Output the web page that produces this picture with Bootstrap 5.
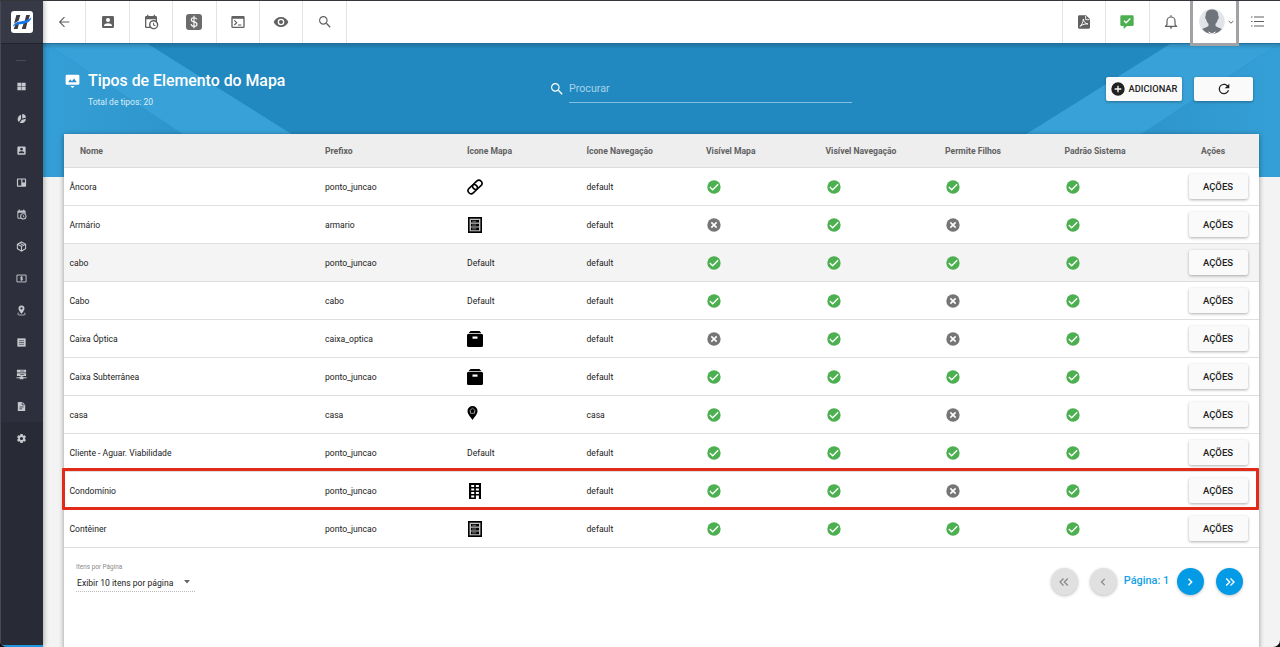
<!DOCTYPE html>
<html lang="pt-BR">
<head>
<meta charset="utf-8">
<meta name="viewport" content="width=device-width, initial-scale=1">
<title>Tipos de Elemento do Mapa</title>
<link href="https://cdn.jsdelivr.net/npm/bootstrap@5.3.0/dist/css/bootstrap.min.css" rel="stylesheet">
<style>
body{font-family:Roboto,"Liberation Sans",sans-serif;font-size:8.6px;line-height:1.4;color:#212121;background:#101014;height:647px;overflow:hidden}
svg{fill:currentColor;flex:none;display:block}
.i16{width:16px;height:16px}.i15{width:15px;height:15px}.i12{width:12px;height:12px}
.shell{height:647px;border-radius:0 0 7px 7px;background:#f3f3f4;overflow:hidden;position:relative}
.topline{position:absolute;top:0;left:0;right:0;height:1px;background:#35353c;z-index:9}
.side{width:43px;background:#2d303c;color:#c6c8cd;border-left:1px solid #474a56;z-index:3;box-shadow:1px 0 5px rgba(0,0,0,.3)}
.brand{height:44px;background:#373a46;border-bottom:1px solid #22252e;padding-right:1px}
.brand svg{width:22px;height:22px}
.dash{width:10px;height:1px;background:#4a4d59;margin:16px 16px 9px 15px}
.side nav{padding-right:2px}
.side nav a{height:32px;color:inherit}
.side nav svg{width:11px;height:11px}
.lower{background:#282a35;border-bottom:2px solid #1f96dd}
.bar{height:44px;background:#fff;color:#616161;border-bottom:1px solid #226e98}
.bar .cell{width:43.4px;border-right:1px solid #e3e3e3}
.bar .rcell{width:43.4px;border-left:1px solid #e3e3e3}
.avatar{width:49px;height:46px;border:3px solid #a0a2a6;border-top:0;background:#fff;position:relative;z-index:4;margin-left:-2px}
.hero{height:133px;background:#2189bf;color:#fff;position:relative}
.hero>.art{position:absolute;inset:0;width:100%;height:100%}
.hero-in{position:relative;padding:27px 27px 0 22px}
.hero h1{font-size:15.85px;font-weight:500;line-height:20px;margin:0;width:456px}
.sub{font-size:8.5px;color:#dceefa;line-height:12px;margin-top:5px}
.find{width:303px;margin-top:8px}
.find .box{width:283px;height:24px;border-bottom:1px solid #82bfe0;color:#a6d2ea;font-size:10.7px;line-height:20px;margin-left:4px}
.mbtn{background:#fafafa;color:#212121;border-radius:2px;font-weight:500;box-shadow:0 1px 3px rgba(0,0,0,.32);border:0;padding:0;text-transform:uppercase;display:flex;align-items:center;justify-content:center}
.hbtn{height:24px;font-size:9.33px;margin-top:6px}
.panel{width:1195px;height:520px;margin:-43px 0 0 21px;background:#fff;box-shadow:0 1px 5px rgba(0,0,0,.4);position:relative}
.grid-t{table-layout:fixed;width:1195px;margin:0;border-collapse:separate;border-spacing:0;line-height:12px}
.grid-t th{height:34px;background:#eee;color:#616161;font-size:8.6px;font-weight:700;padding:0 5.5px;vertical-align:middle;border-bottom:1px solid #dcdcdc}
.grid-t td{height:38px;padding:0 5.5px;vertical-align:middle;border-bottom:1px solid #dfdfdf}
.grid-t th:first-child{padding-left:16px}
.grid-t tr.hov td{background:#f4f4f4}
.grid-t .mbtn{width:59px;height:25px;font-size:9.5px;margin-left:4.5px}
.ok{color:#4caf50}.no{color:#757575}
.ic{color:#000}
.frame{position:absolute;left:-2px;top:334px;width:1197px;height:42px;border:3px solid #e12a18;border-radius:1px}
.pick small{font-size:6.4px;color:#8a8a8a;line-height:8px;display:block}
.pick .val{width:119px;height:20px;border-bottom:1px dotted #bbb;line-height:14px;font-size:8.6px;padding:4px 5px 0 1px}
.rnd{width:27px;height:27px;border-radius:50%;box-shadow:0 1px 3px rgba(0,0,0,.25);background:#039be5;color:#fff}
.rnd.off{background:#e0e0e0;color:#858585}
.pg{color:#139fe6;font-size:10.9px;font-weight:500;line-height:14px}
</style>
</head>
<body>
<svg width="0" height="0" class="position-absolute">
<defs>
<symbol id="ok" viewBox="0 0 24 24"><circle cx="12" cy="12" r="10"/><path d="M5.7 12L10 16.2 18.3 8" fill="none" stroke="#fff" stroke-width="2"/></symbol>
<symbol id="no" viewBox="0 0 24 24"><circle cx="12" cy="12" r="10"/><path d="M8 8l8 8M16 8l-8 8" stroke="#fff" stroke-width="2.3"/></symbol>
<symbol id="acc" viewBox="0 0 24 24"><path d="M6,17C6,15 10,13.9 12,13.9C14,13.9 18,15 18,17V18H6M15,9A3,3 0 0,1 12,12A3,3 0 0,1 9,9A3,3 0 0,1 12,6A3,3 0 0,1 15,9M3,5V19A2,2 0 0,0 5,21H19A2,2 0 0,0 21,19V5A2,2 0 0,0 19,3H5C3.89,3 3,3.9 3,5Z"/></symbol>
<symbol id="cal" viewBox="0 0 24 24"><path d="M15,13H16.5V15.82L18.94,17.23L18.19,18.53L15,16.69V13M19,8H5V19H9.67C9.24,18.09 9,17.07 9,16A7,7 0 0,1 16,9C17.07,9 18.09,9.24 19,9.67V8M5,21C3.89,21 3,20.1 3,19V5C3,3.89 3.89,3 5,3H6V1H8V3H16V1H18V3H19A2,2 0 0,1 21,5V11.1C22.24,12.36 23,14.09 23,16A7,7 0 0,1 16,23C14.09,23 12.36,22.24 11.1,21H5M16,11.15A4.85,4.85 0 0,0 11.15,16C11.15,18.68 13.32,20.85 16,20.85A4.85,4.85 0 0,0 20.85,16C20.85,13.32 18.68,11.15 16,11.15Z"/></symbol>
<symbol id="mag" viewBox="0 0 24 24"><path d="M9.500,3A6.500,6.500 0 0,1 16,9.500C16,11.110 15.410,12.590 14.440,13.730L14.710,14H15.500L20.500,19L19,20.500L14,15.500V14.710L13.730,14.440C12.590,15.410 11.110,16 9.500,16A6.500,6.500 0 0,1 3,9.500A6.500,6.500 0 0,1 9.500,3M9.500,4.700C6.850,4.700 4.700,6.850 4.700,9.500C4.700,12.150 6.850,14.300 9.500,14.300C12.150,14.300 14.300,12.150 14.300,9.500C14.300,6.850 12.150,4.700 9.500,4.700Z"/></symbol>
<symbol id="chain" viewBox="0 0 16 16"><g fill="none" stroke="#000" stroke-width="1.6"><rect x="-5.200" y="-3.100" width="10.400" height="6.200" rx="3.100" transform="translate(5.700 10.200) rotate(-43)"/><rect x="-5.200" y="-3.100" width="10.400" height="6.200" rx="3.100" transform="translate(10.300 5.800) rotate(-43)"/></g></symbol>
<symbol id="rack" viewBox="0 0 16 16"><path d="M1 0h14v16H1z"/><path d="M2.600 1.700h10.800v12.600H2.600z" fill="#c4c4c4"/><path d="M4 2.900h8v2.700H4zM4 6.700h8v2.700H4zM4 10.500h8v2.700H4z"/><path d="M5.200 4.250h4M5.200 8.050h4M5.200 11.850h4" stroke="#999" stroke-width=".8"/></symbol>
<symbol id="crate" viewBox="0 0 16 16"><path d="M3.600 0h8.800l2.200 2.200H1.400zM0 4.300a1.300 1.300 0 0 1 1.300-1.300h13.400A1.300 1.300 0 0 1 16 4.300v10.200a1.500 1.500 0 0 1-1.500 1.500h-13A1.500 1.500 0 0 1 0 14.500z"/><path d="M5.500 5.500h5v2.200h-5z" fill="#fff"/></symbol>
<symbol id="home" viewBox="0 0 10 14"><path d="M5 0a5 5 0 0 1 5 5c0 3.200-2.700 5.500-5 9C2.700 10.500 0 8.200 0 5a5 5 0 0 1 5-5z"/><path d="M1.900 5L5 2.200 8.100 5M3 4.800v2.500h4V4.800" fill="none" stroke="#ccc" stroke-width=".7"/></symbol>
<symbol id="bldg" viewBox="0 0 16 16"><path d="M2 0h12v16H2z"/><path d="M4.200 2h3v2.100h-3zM8.900 2h3v2.100h-3zM4.200 5.500h3v2.100h-3zM8.900 5.500h3v2.100h-3zM4.200 9h3v2.100h-3zM8.900 9h3v2.100h-3zM4.200 12.400h3v2h-3zM8.900 12.400h3V16h-3z" fill="#fff"/></symbol>
</defs></svg>

<div class="shell d-flex">
  <div class="topline"></div>
  <aside class="side d-flex flex-column flex-shrink-0">
    <div class="brand d-flex align-items-center justify-content-center flex-shrink-0">
      <svg viewBox="0 0 22 22"><rect width="22" height="22" rx="3" fill="#fff"/><path d="M5.400 4h4L7.600 9.800l-4.500 2.700zM15.200 4h3.800l-1.800 5.500-3.600.9zM4.500 13.600L8 12.300 6.600 18H2.700zM12.700 12l3.900-1.800L14.800 18h-4z" fill="#3c3c42"/><path d="M1.500 15.700C4 10.500 8.500 10.600 12 10c4-.7 6.500-2.200 8.500-3.800-.6 3.300-3 5.600-7.500 6.500-4.500.9-7.500.1-11.500 3z" fill="#1476e8"/></svg>
    </div>
    <div class="dash"></div>
    <nav class="d-flex flex-column">
      <a class="d-flex align-items-center justify-content-center"><svg viewBox="0 0 24 24"><path d="M3 4h8.500v7.500H3zM12.500 4H21v7.500h-8.500zM3 12.500h8.500V20H3zM12.500 12.500H21V20h-8.500z"/></svg></a>
      <a class="d-flex align-items-center justify-content-center"><svg viewBox="0 0 24 24"><path d="M11 4v9l-5 6.500A9.500 9.500 0 0 1 11 4zM13.500 2a9 9 0 0 1 8.500 8l-8.500 2zM13 14.500l8.700-2A9.500 9.500 0 0 1 8 21z"/></svg></a>
      <a class="d-flex align-items-center justify-content-center"><svg><use href="#acc"/></svg></a>
      <a class="d-flex align-items-center justify-content-center"><svg viewBox="0 0 24 24"><path fill-rule="evenodd" d="M4 3h16a2 2 0 0 1 2 2v14a2 2 0 0 1-2 2H4a2 2 0 0 1-2-2V5a2 2 0 0 1 2-2zm.500 2.500v13h7v-13zm9.500 0V12h5.500V5.500z"/></svg></a>
      <a class="d-flex align-items-center justify-content-center"><svg><use href="#cal"/></svg></a>
      <a class="d-flex align-items-center justify-content-center"><svg viewBox="0 0 24 24"><path d="M12 2l9 5v10l-9 5-9-5V7zM3 7l9 5 9-5M12 12v10M7.500 4.500l9 5" fill="none" stroke="currentColor" stroke-width="2.300"/></svg></a>
      <a class="d-flex align-items-center justify-content-center"><svg viewBox="0 0 24 24"><path d="M2 4.500h20v15H2z" fill="none" stroke="currentColor" stroke-width="2"/><path d="M15 9H10.500v3H14v3H9.500M12 7v10" fill="none" stroke="currentColor" stroke-width="2"/></svg></a>
      <a class="d-flex align-items-center justify-content-center"><svg viewBox="0 0 24 24"><path fill-rule="evenodd" d="M12 1a6.500 6.500 0 0 1 6.500 6.500C18.500 12 12 19 12 19S5.500 12 5.500 7.500A6.500 6.500 0 0 1 12 1zm0 4a2.500 2.500 0 1 0 0 5 2.500 2.500 0 0 0 0-5z"/><path d="M6 17c-6 4 1 5 6 5s12-1 6-5" fill="none" stroke="currentColor" stroke-width="2"/></svg></a>
      <a class="d-flex align-items-center justify-content-center"><svg viewBox="0 0 24 24"><path d="M3 3h18v18H3z"/><path d="M6.500 8h11M6.500 12h11M6.500 16h11" stroke="#5e616c" stroke-width="2"/></svg></a>
      <a class="d-flex align-items-center justify-content-center"><svg viewBox="0 0 24 24"><path d="M2 1.500h20v6H2zM2 9h20v6H2zM1 18h22v2.200H1zM11 14h2v4h-2zM8 16.500h8v6H8z"/><path d="M9 4.500h9M9 12h9" stroke="#2d303c" stroke-width="1.300"/></svg></a>
      <a class="d-flex align-items-center justify-content-center"><svg viewBox="0 0 24 24"><path d="M5 2h9l6 6v14H4V3z"/><path d="M13.500 3v5.500H19M7.500 13h9M7.500 17h6" fill="none" stroke="#2d303c" stroke-width="1.700"/></svg></a>
    </nav>
    <nav class="lower flex-grow-1">
      <a class="d-flex align-items-center justify-content-center"><svg viewBox="0 0 24 24"><path fill-rule="evenodd" d="M19.430 12.980c.04-.32.07-.64.07-.98s-.03-.66-.07-.98l2.110-1.650c.19-.15.24-.42.12-.64l-2-3.460c-.12-.22-.39-.3-.61-.22l-2.490 1c-.52-.4-1.080-.73-1.690-.98l-.38-2.650C14.460 2.180 14.250 2 14 2h-4c-.25 0-.46.18-.49.42l-.38 2.650c-.61.25-1.170.59-1.690.98l-2.490-1c-.23-.09-.49 0-.61.22l-2 3.460c-.13.22-.07.49.12.64l2.110 1.650c-.04.32-.07.65-.07.98s.03.66.07.98l-2.110 1.650c-.19.15-.24.42-.12.64l2 3.460c.12.22.39.3.61.22l2.490-1c.52.4 1.080.73 1.690.98l.38 2.650c.03.24.24.42.49.42h4c.25 0 .46-.18.49-.42l.38-2.650c.61-.25 1.170-.59 1.690-.98l2.490 1c.23.09.49 0 .61-.22l2-3.460c.12-.22.07-.49-.12-.64zM12 15.500a3.500 3.500 0 1 1 0-7 3.500 3.500 0 0 1 0 7z"/></svg></a>
    </nav>
  </aside>

  <main class="flex-grow-1">
    <header class="bar d-flex">
      <div class="cell d-flex align-items-center justify-content-center"><svg class="i16" viewBox="0 0 24 24"><path d="M20,11.200V12.800H7.500L13.300,18.600L12.080,19.800L4.300,12L12.080,4.200L13.300,5.400L7.500,11.200H20Z"/></svg></div>
      <div class="cell d-flex align-items-center justify-content-center"><svg class="i16"><use href="#acc"/></svg></div>
      <div class="cell d-flex align-items-center justify-content-center"><svg class="i16"><use href="#cal"/></svg></div>
      <div class="cell d-flex align-items-center justify-content-center"><svg class="i16" viewBox="0 0 16 16"><rect width="16" height="16" rx="3" fill="#6b6b6b"/><path d="M10.800 5.300C10.400 4 9.300 3.700 8 3.700c-1.600 0-2.700.7-2.700 2C5.300 8.700 11 7 11 10.200c0 1.300-1.300 2.100-3 2.100-1.600 0-2.700-.6-3-2.100M8 1.800v12.400" fill="none" stroke="#fff" stroke-width="1.100"/></svg></div>
      <div class="cell d-flex align-items-center justify-content-center"><svg class="i16" viewBox="0 0 24 24"><path fill-rule="evenodd" d="M4 3h16a2 2 0 0 1 2 2v14a2 2 0 0 1-2 2H4a2 2 0 0 1-2-2V5a2 2 0 0 1 2-2zm0 4v12h16V7z"/><path d="M6.500 9.500L10 13l-3.500 3.500M12 16.500h5" fill="none" stroke="currentColor" stroke-width="1.800"/></svg></div>
      <div class="cell d-flex align-items-center justify-content-center"><svg class="i16" viewBox="0 0 24 24"><path d="M12,9A3,3 0 0,0 9,12A3,3 0 0,0 12,15A3,3 0 0,0 15,12A3,3 0 0,0 12,9M12,17A5,5 0 0,1 7,12A5,5 0 0,1 12,7A5,5 0 0,1 17,12A5,5 0 0,1 12,17M12,4.500C7,4.500 2.730,7.610 1,12C2.730,16.390 7,19.500 12,19.500C17,19.500 21.270,16.390 23,12C21.270,7.610 17,4.500 12,4.500Z"/></svg></div>
      <div class="cell d-flex align-items-center justify-content-center"><svg class="i16"><use href="#mag"/></svg></div>
      <div class="ms-auto rcell d-flex align-items-center justify-content-center"><svg class="i16" viewBox="0 0 24 24"><path d="M5 2h10l6 6v12a2 2 0 0 1-2 2H5a2 2 0 0 1-2-2V4a2 2 0 0 1 2-2z"/><path d="M14.500 3v5.500H20M6 18.500c2-1.500 4.500-5.500 5-11 .5 4.500 3 6.500 7 7.500-4-.5-8 .5-12 3.500z" fill="none" stroke="#fff" stroke-width="1.400"/></svg></div>
      <div class="rcell d-flex align-items-center justify-content-center ok"><svg class="i16" viewBox="0 0 24 24"><path d="M4 2h16a2 2 0 0 1 2 2v12a2 2 0 0 1-2 2h-8l-5 4.500V18H4a2 2 0 0 1-2-2V4a2 2 0 0 1 2-2z"/><path d="M7.500 10l3.200 3.200 6.300-6.400" fill="none" stroke="#fff" stroke-width="2"/></svg></div>
      <div class="rcell d-flex align-items-center justify-content-center"><svg class="i16" viewBox="0 0 24 24"><path d="M3.500 18.500h17L18 16v-5.500a6 6 0 0 0-12 0V16zM12 4.500V2.500" fill="none" stroke="currentColor" stroke-width="1.800" stroke-linejoin="round" stroke-linecap="round"/><path d="M10 20h4a2 2 0 0 1-4 0z"/></svg></div>
      <div class="avatar d-flex align-items-center flex-shrink-0">
        <svg width="35" height="30" viewBox="0 0 35 30"><circle cx="19" cy="14.500" r="12.800" fill="#e2e4e8"/><path d="M19 2.500c4.300 0 6.600 2.700 6.300 6.500.8.300.6 3-.5 3.600-.4 2-1.200 3.300-2.300 4.200v2c1 1.500 4.200 2 6.300 3.300-2.300 3-5.800 4.700-9.800 4.700s-7.500-1.700-9.800-4.700c2.100-1.300 5.300-1.800 6.300-3.300v-2c-1.100-.9-1.900-2.200-2.300-4.200-1.100-.6-1.300-3.300-.5-3.600-.3-3.800 2-6.500 6.300-6.500z" fill="#6e737c"/><path d="M15.500 25l3.500 2 3.500-2" stroke="#fff" fill="none"/></svg>
        <svg width="6" height="6" viewBox="0 0 6 6"><path d="M.6 2l2.400 2.200L5.400 2" fill="none" stroke="#666" stroke-width="1"/></svg>
      </div>
      <div class="d-flex align-items-center justify-content-center pe-1" style="width:41px"><svg class="i15" viewBox="0 0 15 15"><path d="M1 3h1.500M1 7.500h1.500M1 12h1.500M4 3h10M4 7.500h10M4 12h10" stroke="currentColor" stroke-width="1.200"/></svg></div>
    </header>

    <section class="hero">
      <svg class="art" viewBox="0 0 1237 133" preserveAspectRatio="none">
        <defs>
          <linearGradient id="ga" x1="0" y1="0" x2="1" y2="0"><stop offset="0" stop-color="#349fd6"/><stop offset="1" stop-color="#2b90c6"/></linearGradient>
          <linearGradient id="gb" x1="0" y1="0" x2="1" y2="0"><stop offset="0" stop-color="#2b90c6"/><stop offset="1" stop-color="#349fd6"/></linearGradient>
          <linearGradient id="top" x1="0" y1="0" x2="0" y2="1"><stop offset="0" stop-color="#000" stop-opacity=".16"/><stop offset="1" stop-color="#000" stop-opacity="0"/></linearGradient>
        </defs>
        <path d="M0 0h4l200 133H0z" fill="url(#ga)"/><path d="M4 0h101l212 133H204z" fill="#38a1d7"/>
        <path d="M1237 0h-2l-202 133h204z" fill="url(#gb)"/><path d="M1235 0h-108L915 133h118z" fill="#38a1d7"/>
        <path d="M0 0h1237v5H0z" fill="url(#top)"/>
      </svg>
      <div class="hero-in d-flex align-items-start">
        <svg width="15" height="15" viewBox="0 0 24 24" style="margin-top:3px"><path d="M3 1h18a2 2 0 0 1 2 2v12a2 2 0 0 1-2 2H3a2 2 0 0 1-2-2V3a2 2 0 0 1 2-2zM8.500 19h7L12 22.500z"/><path d="M5 13l3.500-4.500 2.500 3 3.500-4.500 4.500 6z" fill="#2b90c6"/></svg>
        <div class="ms-2"><h1>Tipos de Elemento do Mapa</h1><div class="sub">Total de tipos: 20</div></div>
        <div class="find d-flex align-items-start" style="margin-left:5px"><svg class="i16" style="margin-top:2px"><use href="#mag"/></svg><div class="box">Procurar</div></div>
        <button class="mbtn hbtn ms-auto" style="width:76px"><svg class="i16" style="margin:0 3px 0 -1px" viewBox="0 0 24 24"><path d="M17,13H13V17H11V13H7V11H11V7H13V11H17M12,2A10,10 0 0,0 2,12A10,10 0 0,0 12,22A10,10 0 0,0 22,12A10,10 0 0,0 12,2Z"/></svg>Adicionar</button>
        <button class="mbtn hbtn" style="width:59px;margin-left:12px"><svg class="i16" viewBox="0 0 24 24"><path d="M17.650,6.350C16.200,4.900 14.210,4 12,4A8,8 0 0,0 4,12A8,8 0 0,0 12,20C15.730,20 18.840,17.450 19.730,14H17.650C16.830,16.330 14.610,18 12,18A6,6 0 0,1 6,12A6,6 0 0,1 12,6C13.660,6 15.140,6.690 16.220,7.780L13,11H20V4L17.650,6.350Z"/></svg></button>
      </div>
    </section>

    <section class="panel">
      <table class="grid-t">
        <colgroup><col style="width:255.500px"><col style="width:142px"><col style="width:119.500px"><col style="width:119.500px"><col style="width:119.500px"><col style="width:119.500px"><col style="width:119.500px"><col style="width:119.500px"><col style="width:80.500px"></colgroup>
        <thead><tr><th>Nome</th><th>Prefixo</th><th>Ícone Mapa</th><th>Ícone Navegação</th><th>Visível Mapa</th><th>Visível Navegação</th><th>Permite Filhos</th><th>Padrão Sistema</th><th style="padding-left:22.500px">Ações</th></tr></thead>
        <tbody>
        <tr><td>Âncora</td><td>ponto_juncao</td><td><svg class="i16 ic"><use href="#chain"/></svg></td><td>default</td><td><svg class="i16 ok"><use href="#ok"/></svg></td><td><svg class="i16 ok"><use href="#ok"/></svg></td><td><svg class="i16 ok"><use href="#ok"/></svg></td><td><svg class="i16 ok"><use href="#ok"/></svg></td><td><button class="mbtn">Ações</button></td></tr>
        <tr><td>Armário</td><td>armario</td><td><svg class="i16 ic"><use href="#rack"/></svg></td><td>default</td><td><svg class="i16 no"><use href="#no"/></svg></td><td><svg class="i16 ok"><use href="#ok"/></svg></td><td><svg class="i16 no"><use href="#no"/></svg></td><td><svg class="i16 ok"><use href="#ok"/></svg></td><td><button class="mbtn">Ações</button></td></tr>
        <tr class="hov"><td>cabo</td><td>ponto_juncao</td><td>Default</td><td>default</td><td><svg class="i16 ok"><use href="#ok"/></svg></td><td><svg class="i16 ok"><use href="#ok"/></svg></td><td><svg class="i16 ok"><use href="#ok"/></svg></td><td><svg class="i16 ok"><use href="#ok"/></svg></td><td><button class="mbtn">Ações</button></td></tr>
        <tr><td>Cabo</td><td>cabo</td><td>Default</td><td>default</td><td><svg class="i16 ok"><use href="#ok"/></svg></td><td><svg class="i16 ok"><use href="#ok"/></svg></td><td><svg class="i16 no"><use href="#no"/></svg></td><td><svg class="i16 ok"><use href="#ok"/></svg></td><td><button class="mbtn">Ações</button></td></tr>
        <tr><td>Caixa Óptica</td><td>caixa_optica</td><td><svg class="i16 ic"><use href="#crate"/></svg></td><td>default</td><td><svg class="i16 no"><use href="#no"/></svg></td><td><svg class="i16 ok"><use href="#ok"/></svg></td><td><svg class="i16 no"><use href="#no"/></svg></td><td><svg class="i16 ok"><use href="#ok"/></svg></td><td><button class="mbtn">Ações</button></td></tr>
        <tr><td>Caixa Subterrânea</td><td>ponto_juncao</td><td><svg class="i16 ic"><use href="#crate"/></svg></td><td>default</td><td><svg class="i16 ok"><use href="#ok"/></svg></td><td><svg class="i16 ok"><use href="#ok"/></svg></td><td><svg class="i16 ok"><use href="#ok"/></svg></td><td><svg class="i16 ok"><use href="#ok"/></svg></td><td><button class="mbtn">Ações</button></td></tr>
        <tr><td>casa</td><td>casa</td><td><svg class="ic mb-1" width="11" height="14"><use href="#home"/></svg></td><td>casa</td><td><svg class="i16 ok"><use href="#ok"/></svg></td><td><svg class="i16 ok"><use href="#ok"/></svg></td><td><svg class="i16 no"><use href="#no"/></svg></td><td><svg class="i16 ok"><use href="#ok"/></svg></td><td><button class="mbtn">Ações</button></td></tr>
        <tr><td>Cliente - Aguar. Viabilidade</td><td>ponto_juncao</td><td>Default</td><td>default</td><td><svg class="i16 ok"><use href="#ok"/></svg></td><td><svg class="i16 ok"><use href="#ok"/></svg></td><td><svg class="i16 ok"><use href="#ok"/></svg></td><td><svg class="i16 ok"><use href="#ok"/></svg></td><td><button class="mbtn">Ações</button></td></tr>
        <tr><td>Condomínio</td><td>ponto_juncao</td><td><svg class="i16 ic"><use href="#bldg"/></svg></td><td>default</td><td><svg class="i16 ok"><use href="#ok"/></svg></td><td><svg class="i16 ok"><use href="#ok"/></svg></td><td><svg class="i16 no"><use href="#no"/></svg></td><td><svg class="i16 ok"><use href="#ok"/></svg></td><td><button class="mbtn">Ações</button></td></tr>
        <tr><td>Contêiner</td><td>ponto_juncao</td><td><svg class="i16 ic"><use href="#rack"/></svg></td><td>default</td><td><svg class="i16 ok"><use href="#ok"/></svg></td><td><svg class="i16 ok"><use href="#ok"/></svg></td><td><svg class="i16 ok"><use href="#ok"/></svg></td><td><svg class="i16 ok"><use href="#ok"/></svg></td><td><button class="mbtn">Ações</button></td></tr>
        </tbody>
      </table>
      <div class="frame"></div>
      <div class="d-flex align-items-start justify-content-between" style="padding:15px 16px 0 12px">
        <div class="pick"><small>Itens por Página</small><div class="d-flex justify-content-between val" style="height:21px;padding-top:5px">Exibir 10 itens por página<svg width="6" height="4" viewBox="0 0 6 4" class="mt-1"><path d="M0 0h6L3 3.500z" fill="#666"/></svg></div></div>
        <div class="d-flex align-items-center" style="padding-top:5px">
          <div class="rnd off d-flex align-items-center justify-content-center"><svg class="i12" viewBox="0 0 12 12"><path d="M5.500 2.500L2 6l3.500 3.500M9.800 2.500L6.300 6l3.500 3.500" fill="none" stroke="currentColor" stroke-width="1.200"/></svg></div>
          <div class="rnd off d-flex align-items-center justify-content-center" style="margin-left:12px"><svg class="i12" viewBox="0 0 12 12"><path d="M7.700 2.800L4.500 6l3.200 3.200" fill="none" stroke="currentColor" stroke-width="1.200"/></svg></div>
          <div class="pg text-center" style="width:60px;margin-top:-2px">Página: 1</div>
          <div class="rnd d-flex align-items-center justify-content-center"><svg class="i12" viewBox="0 0 12 12"><path d="M4.500 2.800L7.700 6 4.500 9.200" fill="none" stroke="currentColor" stroke-width="1.400"/></svg></div>
          <div class="rnd d-flex align-items-center justify-content-center" style="margin-left:12.500px"><svg class="i12" viewBox="0 0 12 12"><path d="M2.200 2.500L5.700 6 2.200 9.500M6.500 2.500L10 6 6.500 9.500" fill="none" stroke="currentColor" stroke-width="1.400"/></svg></div>
        </div>
      </div>
    </section>
  </main>
</div>
<script src="https://cdn.jsdelivr.net/npm/bootstrap@5.3.0/dist/js/bootstrap.bundle.min.js"></script>
</body>
</html>
